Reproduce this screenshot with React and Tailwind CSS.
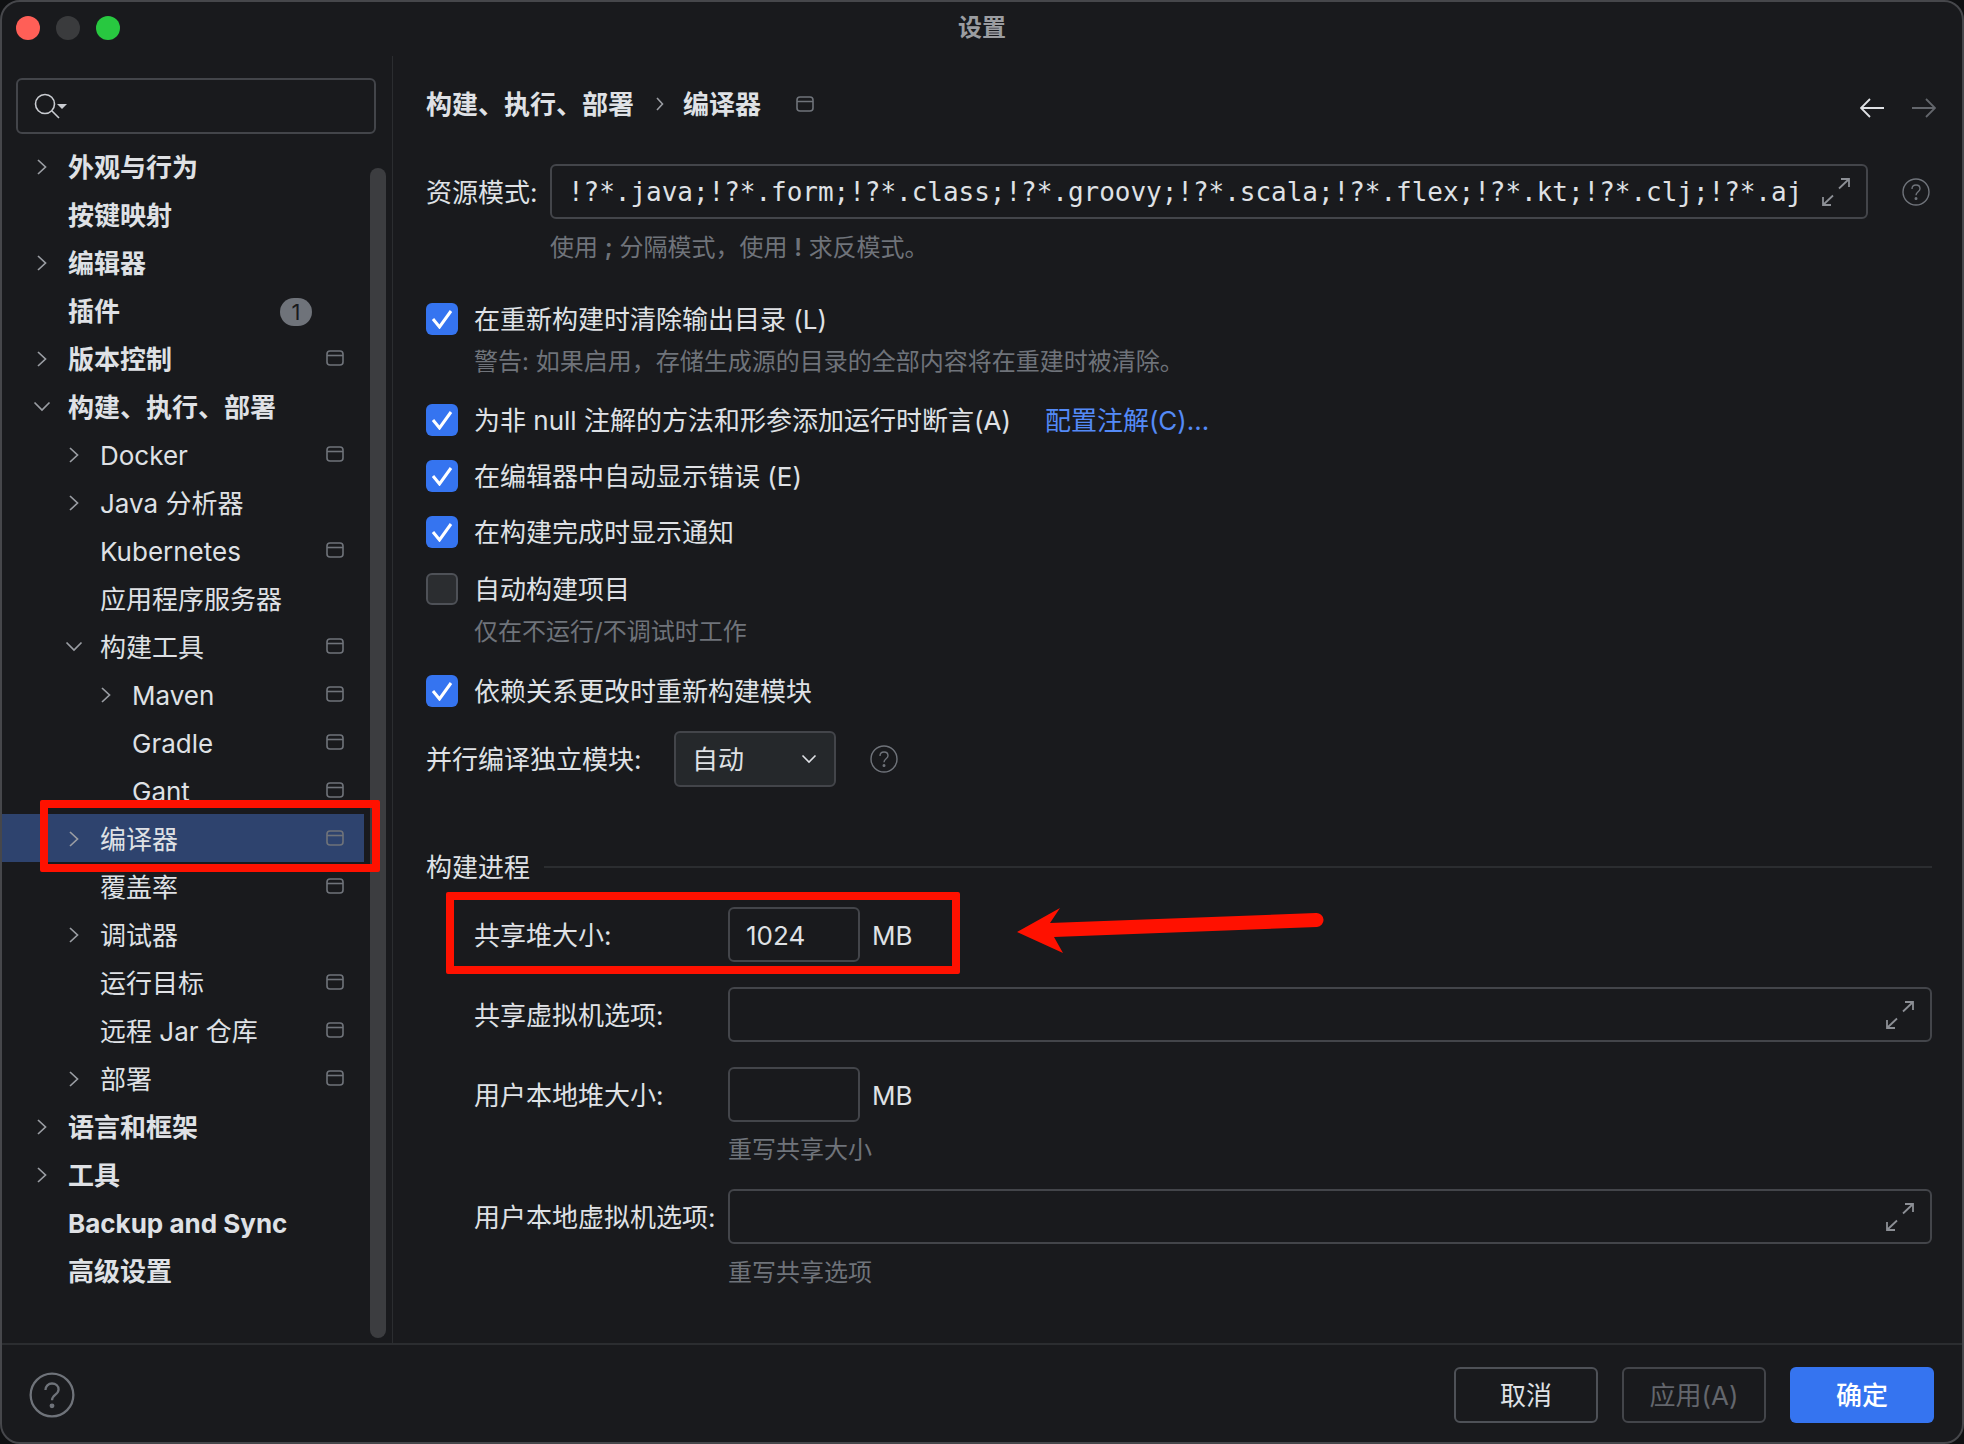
import React from 'react';

const font = { fontFamily: 'Inter, "Noto Sans CJK SC", sans-serif' };

const tree = [
    { label: '外观与行为', level: 0, arrow: 'right', bold: true },
    { label: '按键映射', level: 0, bold: true },
    { label: '编辑器', level: 0, arrow: 'right', bold: true },
    { label: '插件', level: 0, bold: true, badge: '1' },
    { label: '版本控制', level: 0, arrow: 'right', bold: true, win: true },
    { label: '构建、执行、部署', level: 0, arrow: 'down', bold: true },
    { label: 'Docker', level: 1, arrow: 'right', win: true },
    { label: 'Java 分析器', level: 1, arrow: 'right' },
    { label: 'Kubernetes', level: 1, win: true },
    { label: '应用程序服务器', level: 1 },
    { label: '构建工具', level: 1, arrow: 'down', win: true },
    { label: 'Maven', level: 2, arrow: 'right', win: true },
    { label: 'Gradle', level: 2, win: true },
    { label: 'Gant', level: 2, win: true },
    { label: '编译器', level: 1, arrow: 'right', win: true, selected: true },
    { label: '覆盖率', level: 1, win: true },
    { label: '调试器', level: 1, arrow: 'right' },
    { label: '运行目标', level: 1, win: true },
    { label: '远程 Jar 仓库', level: 1, win: true },
    { label: '部署', level: 1, arrow: 'right', win: true },
    { label: '语言和框架', level: 0, arrow: 'right', bold: true },
    { label: '工具', level: 0, arrow: 'right', bold: true },
    { label: 'Backup and Sync', level: 0, bold: true },
    { label: '高级设置', level: 0, bold: true },
];

const indent = ['pl-[35px]', 'pl-[67px]', 'pl-[99px]'];

function WinIcon({ className = '' }) {
    return (
        <svg width="18" height="16" viewBox="0 0 18 16" fill="none" stroke="#6f737a" strokeWidth="1.6" className={className}>
            <rect x="1" y="1" width="16" height="14" rx="3" />
            <path d="M1 5.5h16" />
        </svg>
    );
}

function Chevron({ dir }) {
    if (dir === 'down') {
        return (
            <svg width="18" height="11" viewBox="0 0 18 11" fill="none" stroke="#9a9da3" strokeWidth="1.7" className="-ml-[4px]">
                <path d="M1.5 1.5 9 9l7.5-7.5" />
            </svg>
        );
    }
    return (
        <svg width="10" height="16" viewBox="0 0 10 16" fill="none" stroke="#9a9da3" strokeWidth="1.7">
            <path d="M1 1l7.5 7L1 15" />
        </svg>
    );
}

function TreeRow({ item }) {
    return (
        <div className={`flex h-12 items-center pt-[3px] pr-[20px] ${indent[item.level]} ${item.selected ? 'bg-[#2e436e]' : ''}`}>
            <div className="-mt-[2px] flex w-[31px] flex-none items-center">{item.arrow && <Chevron dir={item.arrow} />}</div>
            <span className={`text-[26px] leading-[34px] whitespace-pre text-[#dfe1e5] ${item.bold ? 'font-bold' : ''}`}>{item.label}</span>
            {item.win && <WinIcon className="-mt-[3px] ml-auto" />}
            {item.badge && (
                <span className="mr-[32px] ml-auto flex h-[28px] w-[32px] items-center justify-center rounded-full bg-[#6f737a] text-[22px] leading-none text-[#191a1d]">
                    {item.badge}
                </span>
            )}
        </div>
    );
}

function Checkbox({ checked }) {
    if (!checked) {
        return <div className="h-[32px] w-[32px] flex-none rounded-[6px] border-2 border-[#4e5157] bg-[#2b2d30]" />;
    }
    return (
        <div className="flex h-[32px] w-[32px] flex-none items-center justify-center rounded-[6px] bg-[#3574f0]">
            <svg width="24" height="20" viewBox="0 0 24 20" fill="none" stroke="#ffffff" strokeWidth="3">
                <path d="M3 10l6.5 8L21 2" />
            </svg>
        </div>
    );
}

function CheckRow({ checked, className = '', children }) {
    return (
        <div className={`flex h-[32px] items-center gap-4 ${className}`}>
            <Checkbox checked={checked} />
            <span className="pt-[1px] text-[26px] whitespace-pre text-[#dfe1e5]">{children}</span>
        </div>
    );
}

function Hint({ className = '', children }) {
    return <div className={`flex h-[32px] items-center pt-[2px] text-[24px] whitespace-pre text-[#6f737a] ${className}`}>{children}</div>;
}

function Help({ size = 28, className = '' }) {
    return (
        <svg width={size} height={size} viewBox="0 0 28 28" fill="none" stroke="#6f737a" strokeWidth="1.4" className={className}>
            <circle cx="14" cy="14" r="13" />
            <path d="M10 11c0-2.4 1.8-4 4-4s4 1.5 4 3.7c0 3.2-4 3-4 6.5" />
            <circle cx="14" cy="20.6" r="0.8" fill="#6f737a" />
        </svg>
    );
}

function Expand({ className = '' }) {
    return (
        <svg width="28" height="28" viewBox="0 0 28 28" fill="none" stroke="#8c8f95" strokeWidth="1.8" className={className}>
            <path d="M17 10.5 27 1M19 1h8v8M11 17.5 1 27M9 27H1v-8" />
        </svg>
    );
}

function Input({ wide, value, className = '' }) {
    return (
        <div className={`flex h-[55px] items-center rounded-[6px] border-2 border-[#43454a] pl-[16px] text-[26px] text-[#dfe1e5] ${wide ? 'flex-1 justify-end pr-[16px]' : 'w-[132px] pt-[2px]'} ${className}`}>
            {wide ? <Expand /> : value}
        </div>
    );
}

function FormRow({ label, className = '', children }) {
    return (
        <div className={`flex h-[55px] items-center pl-[48px] ${className}`}>
            <span className="w-[254px] flex-none pt-[2px] text-[26px] whitespace-pre text-[#dfe1e5]">{label}</span>
            {children}
        </div>
    );
}

export default function App() {
    return (
        <div className="h-[1444px] w-[1964px] overflow-hidden bg-[#0f1012]" style={font}>
            <div className="relative flex h-full flex-col overflow-hidden rounded-[20px] border-2 border-[#46474b] bg-[#191a1d]">
                {/* title bar */}
                <div className="relative flex h-[54px] flex-none items-center pb-[2px] pl-[14px]">
                    <div className="flex gap-[16px]">
                        <span className="h-[24px] w-[24px] rounded-full bg-[#ff5f57]" />
                        <span className="h-[24px] w-[24px] rounded-full bg-[#3a3b3d]" />
                        <span className="h-[24px] w-[24px] rounded-full bg-[#28c840]" />
                    </div>
                    <span className="absolute inset-x-0 text-center text-[24px] font-semibold text-[#9b9da1]">设置</span>
                </div>

                <div className="flex min-h-0 flex-1">
                    {/* sidebar */}
                    <div className="flex w-[391px] flex-none flex-col border-r border-[#2b2d30]">
                        <div className="mt-[22px] ml-[14px] flex h-[56px] w-[360px] flex-none items-center rounded-[6px] border-2 border-[#43454a] pt-[4px] pl-[16px]">
                            <svg width="36" height="30" viewBox="0 0 36 30" fill="none" stroke="#c9ccd1" strokeWidth="1.6">
                                <circle cx="11" cy="11" r="9.5" />
                                <path d="M18 18l7 7" />
                                <path d="M23 11h10l-5 5z" fill="#c9ccd1" stroke="none" />
                            </svg>
                        </div>
                        <div className="flex min-h-0 flex-1">
                            <div className="mt-[8px] w-[362px] flex-none">
                                {tree.map((item) => (
                                    <TreeRow key={item.label} item={item} />
                                ))}
                            </div>
                            <div className="mt-[34px] mb-[5px] ml-[6px] w-[16px] rounded-full bg-[#3c3d40]" />
                        </div>
                    </div>

                    {/* settings */}
                    <div className="min-w-0 flex-1 pt-[20px] pr-[30px] pl-[33px]">
                        <div className="flex h-[56px] items-center">
                            <span className="text-[26px] font-semibold text-[#dfe1e5]">构建、执行、部署</span>
                            <svg width="8" height="14" viewBox="0 0 8 14" fill="none" stroke="#9a9da3" strokeWidth="1.6" className="mr-[19px] ml-[22px]">
                                <path d="M1 1l5.5 6L1 13" />
                            </svg>
                            <span className="text-[26px] font-semibold text-[#dfe1e5]">编译器</span>
                            <WinIcon className="ml-[35px]" />
                            <div className="-mr-[4px] ml-auto flex items-center gap-[28px] pt-[8px]">
                                <svg width="24" height="20" viewBox="0 0 24 20" fill="none" stroke="#dfe1e5" strokeWidth="1.8">
                                    <path d="M24 10H2M10 1l-9 9 9 9" />
                                </svg>
                                <svg width="24" height="20" viewBox="0 0 24 20" fill="none" stroke="#63666c" strokeWidth="1.8">
                                    <path d="M0 10h22M14 1l9 9-9 9" />
                                </svg>
                            </div>
                        </div>

                        <div className="mt-[32px] flex h-[55px] items-center">
                            <span className="w-[124px] flex-none pt-[2px] text-[26px] whitespace-pre text-[#dfe1e5]">资源模式:</span>
                            <div className="flex h-full w-[1318px] items-center justify-between rounded-[6px] border-2 border-[#43454a] pr-[16px] pl-[16px]">
                                <span className="pt-[2px] font-['DejaVu_Sans_Mono',monospace] text-[26px] tracking-[-0.03px] text-[#dfe1e5]">!?*.java;!?*.form;!?*.class;!?*.groovy;!?*.scala;!?*.flex;!?*.kt;!?*.clj;!?*.aj</span>
                                <Expand />
                            </div>
                            <Help className="ml-[34px]" />
                        </div>
                        <Hint className="mt-[12px] pl-[124px]">
                            使用 <span className="font-semibold">;</span> 分隔模式，使用 <span className="font-semibold">!</span> 求反模式。
                        </Hint>

                        <CheckRow checked className="mt-[40px]">在重新构建时清除输出目录 (L)</CheckRow>
                        <Hint className="mt-[10px] pl-[48px]">警告: 如果启用，存储生成源的目录的全部内容将在重建时被清除。</Hint>
                        <div className="mt-[27px] flex h-[32px] items-center">
                            <CheckRow checked>为非 null 注解的方法和形参添加运行时断言(A)</CheckRow>
                            <span className="ml-[34px] pt-[1px] text-[26px] whitespace-pre text-[#548af7]">配置注解(C)...</span>
                        </div>
                        <CheckRow checked className="mt-[24px]">在编辑器中自动显示错误 (E)</CheckRow>
                        <CheckRow checked className="mt-[24px]">在构建完成时显示通知</CheckRow>
                        <CheckRow className="mt-[25px]">自动构建项目</CheckRow>
                        <Hint className="mt-[10px] pl-[48px]">仅在不运行/不调试时工作</Hint>
                        <CheckRow checked className="mt-[28px]">依赖关系更改时重新构建模块</CheckRow>

                        <div className="mt-[24px] flex h-[56px] items-center">
                            <span className="w-[248px] flex-none text-[26px] whitespace-pre text-[#dfe1e5]">并行编译独立模块:</span>
                            <div className="flex h-full w-[162px] items-center justify-between rounded-[6px] border-2 border-[#43454a] bg-[#25282b] pr-[17px] pl-[16px] text-[26px] text-[#dfe1e5]">
                                自动
                                <svg width="16" height="10" viewBox="0 0 16 10" fill="none" stroke="#dfe1e5" strokeWidth="1.6">
                                    <path d="M1.5 1.5 8 8l6.5-6.5" />
                                </svg>
                            </div>
                            <Help className="ml-[34px]" />
                        </div>

                        <div className="mt-[64px] flex h-[32px] items-center gap-[14px]">
                            <span className="text-[26px] whitespace-pre text-[#dfe1e5]">构建进程</span>
                            <div className="h-[2px] flex-1 bg-[#2b2d30]" />
                        </div>

                        <FormRow label="共享堆大小:" className="mt-[24px]">
                            <Input value="1024" />
                            <span className="ml-[12px] pt-[2px] text-[26px] text-[#dfe1e5]">MB</span>
                        </FormRow>
                        <FormRow label="共享虚拟机选项:" className="mt-[25px]">
                            <Input wide />
                        </FormRow>
                        <FormRow label="用户本地堆大小:" className="mt-[25px]">
                            <Input />
                            <span className="ml-[12px] pt-[2px] text-[26px] text-[#dfe1e5]">MB</span>
                        </FormRow>
                        <Hint className="mt-[11px] pl-[302px]">重写共享大小</Hint>
                        <FormRow label="用户本地虚拟机选项:" className="mt-[24px]">
                            <Input wide />
                        </FormRow>
                        <Hint className="mt-[12px] pl-[302px]">重写共享选项</Hint>
                    </div>
                </div>

                {/* footer */}
                <div className="flex h-[99px] flex-none items-start border-t-2 border-[#2b2d30] pt-[22px] pr-[28px] pl-[27px]">
                    <Help size={46} className="mt-[5px]" />
                    <div className="ml-auto flex gap-[24px]">
                        <div className="flex h-[56px] w-[144px] items-center justify-center rounded-[6px] border-2 border-[#4e5157] text-[26px] text-[#dfe1e5]">取消</div>
                        <div className="flex h-[56px] w-[144px] items-center justify-center rounded-[6px] border-2 border-[#43454a] text-[26px] text-[#63666c]">应用(A)</div>
                        <div className="flex h-[56px] w-[144px] items-center justify-center rounded-[6px] bg-[#3574f0] text-[26px] font-medium text-white">确定</div>
                    </div>
                </div>

                {/* red annotations drawn over the dialog */}
                <div className="absolute top-[798px] left-[38px] h-[72px] w-[340px] rounded-[2px] border-8 border-[#ff1100]" />
                <div className="absolute top-[890px] left-[444px] h-[82px] w-[514px] rounded-[2px] border-8 border-[#ff1100]" />
                <svg className="absolute top-[898px] left-[1005px]" width="330" height="60" viewBox="1007 900 330 60">
                    <path d="M1017 932 1060 908 1050 923 1316 913a7 7 0 0 1 1 14L1054 937 1063 953z" fill="#ff1100" />
                </svg>
            </div>
        </div>
    );
}
